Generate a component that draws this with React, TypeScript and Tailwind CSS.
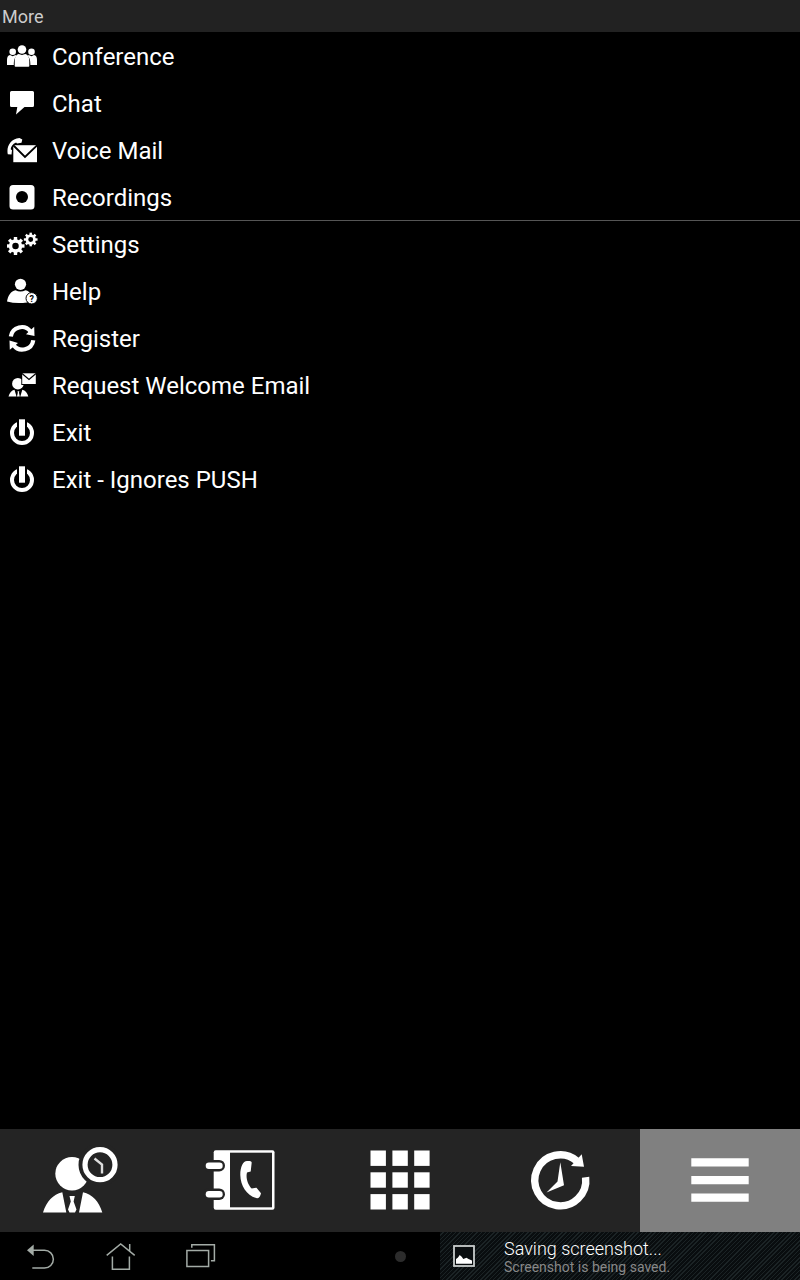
import React from 'react';

interface MenuItem {
  label: string;
  icon: React.ReactNode;
}

const TEETH = [0, 45, 90, 135, 180, 225, 270, 315];

const MenuIcon: React.FC<{ children: React.ReactNode }> = ({ children }) => (
  <svg viewBox="0 0 31 31" className="h-[31px] w-[31px] shrink-0 fill-white" aria-hidden="true">
    {children}
  </svg>
);

const TabIcon: React.FC<{ children: React.ReactNode }> = ({ children }) => (
  <svg viewBox="0 0 80 71" className="h-[71px] w-20 fill-white" aria-hidden="true">
    {children}
  </svg>
);

const SystemIcon: React.FC<{ children: React.ReactNode }> = ({ children }) => (
  <svg viewBox="0 0 40 32" className="h-8 w-10 fill-none stroke-[#a3aba6]" strokeWidth="1.5" aria-hidden="true">
    {children}
  </svg>
);

const Gear: React.FC<{ cx: number; cy: number; r: number; tooth: number }> = ({ cx, cy, r, tooth }) => (
  <g transform={`translate(${cx} ${cy})`}>
    <circle r={r} fill="none" stroke="white" strokeWidth={r * 0.7} />
    {TEETH.map((angle) => (
      <rect
        key={angle}
        x={-tooth / 2}
        y={-r * 1.8}
        width={tooth}
        height={r * 0.7}
        transform={`rotate(${angle})`}
      />
    ))}
  </g>
);

const PowerIcon = () => (
  <MenuIcon>
    <circle cx="15" cy="16" r="10" fill="none" stroke="white" strokeWidth="4" />
    <path d="M10 0h10v12H10z" fill="black" />
    <path d="M12 2.300h6v16.400h-6z" />
  </MenuIcon>
);

const callItems: MenuItem[] = [
  {
    label: 'Conference',
    icon: (
      <MenuIcon>
        <circle cx="5.7" cy="10.8" r="3.3" />
        <circle cx="24.5" cy="10.8" r="3.3" />
        <path d="M0 24v-5c0-3 1-4.8 3-5l2.700 1.300L8.500 14l1 1c-2 2-2.700 4-2.700 9z" />
        <path d="M30 24v-5c0-3-1-4.8-3-5l-2.500 1.300L21.700 14l-1 1c2 2 2.700 4 2.700 9z" />
        <circle cx="15" cy="8.5" r="4.3" />
        <path d="M7.700 25v-5c0-4 1.300-6.500 4-7L15 14l3.300-1c2.700.5 4 3 4 7v5q0 .8-.8.8h-13q-.8 0-.8-.8z" />
      </MenuIcon>
    ),
  },
  {
    label: 'Chat',
    icon: (
      <MenuIcon>
        <path d="M4.500 3h21q1.500 0 1.500 1.500v13q0 1.500-1.500 1.500h-8L9 26.500l1.300-7.500H4.500Q3 19 3 17.500v-13Q3 3 4.500 3z" />
      </MenuIcon>
    ),
  },
  {
    label: 'Voice Mail',
    icon: (
      <MenuIcon>
        <path d="M6.300 10.200H30v17H6.300z" />
        <path d="M6 10l12 12L30.500 10" fill="none" stroke="black" strokeWidth="1.8" />
        <path d="M4.500 19.500L.8 19.300C-.8 12 3 4 12.500 3l2.800 1.500-.8 3.300-4.500.7-.9-1C5.500 9 4 11.500 3.700 14.300l1.300.9z" />
      </MenuIcon>
    ),
  },
  {
    label: 'Recordings',
    icon: (
      <MenuIcon>
        <rect x="2.5" y="3" width="25" height="24.5" rx="3.5" />
        <circle cx="15" cy="15" r="6" fill="black" />
      </MenuIcon>
    ),
  },
];

const appItems: MenuItem[] = [
  {
    label: 'Settings',
    icon: (
      <MenuIcon>
        <Gear cx={8.5} cy={17} r={5} tooth={3.4} />
        <Gear cx={23.7} cy={10.5} r={3.8} tooth={2.4} />
      </MenuIcon>
    ),
  },
  {
    label: 'Help',
    icon: (
      <MenuIcon>
        <circle cx="13.5" cy="8.3" r="5.6" />
        <path d="M0 25.500C1 19.500 4 15 8.500 14.200q5 2.600 10 0c2.500.5 4.500 2 5.500 4L20 26.500Q9 28 0 25.500z" />
        <circle cx="24.7" cy="22.3" r="5.7" stroke="black" strokeWidth="1" />
        <text
          x="24.7"
          y="25.6"
          textAnchor="middle"
          fill="black"
          className="font-['Roboto',sans-serif] text-[9px] font-bold"
        >
          ?
        </text>
      </MenuIcon>
    ),
  },
  {
    label: 'Register',
    icon: (
      <MenuIcon>
        <path
          d="M3.800 13.500A11 11 0 0 1 23.500 8.500M26.300 17.200A11 11 0 0 1 6.500 22"
          fill="none"
          stroke="white"
          strokeWidth="4.2"
        />
        <path d="M27.200 3.800l.3 9.200-8.500-1.700zM2.800 26.800l-.3-9.200 8.500 2.500z" />
      </MenuIcon>
    ),
  },
  {
    label: 'Request Welcome Email',
    icon: (
      <MenuIcon>
        <circle cx="10.9" cy="13.7" r="5.8" />
        <path d="M14.300 2.500H30V15H14.300z" fill="black" />
        <path d="M15.200 3.300h13.600v10.700H15.200z" />
        <path d="M15 3.500l7 6 7-6" fill="none" stroke="black" strokeWidth="1.2" />
        <path d="M1.500 26.500c1-3.500 3-6 6-6.700l2 6.700zM21.300 26.500c-1-3.500-3-6-6-6.700l-2 6.700zM10.500 21.200h1.800l-.3 1.500.8 3.800h-2.800l.8-3.800z" />
      </MenuIcon>
    ),
  },
  { label: 'Exit', icon: <PowerIcon /> },
  { label: 'Exit - Ignores PUSH', icon: <PowerIcon /> },
];

const tabs = [
  {
    label: 'Presence',
    active: false,
    icon: (
      <TabIcon>
        <circle cx="32" cy="28.7" r="16.7" />
        <circle cx="60" cy="19.7" r="21.5" fill="#242424" />
        <circle cx="60" cy="19.7" r="15" fill="none" stroke="white" strokeWidth="5.2" />
        <path d="M54.500 13.500L62 19.500V28.500" fill="none" stroke="#ddd" strokeWidth="2.4" />
        <path d="M3 67.500C6.500 56.500 13 49.500 22.300 47.300L26.300 67.500zM62.300 67.500C59 56.500 52.500 49.500 43 47.300L39 67.500z" />
        <path d="M29.500 51h5.300l-1.200 5.500L36.500 64.500 35 67.500h-5.500L28 64.500l2.800-8z" />
      </TabIcon>
    ),
  },
  {
    label: 'Contacts',
    active: false,
    icon: (
      <TabIcon>
        <rect x="13.7" y="5.3" width="60.8" height="59.5" rx="2" />
        <rect x="30" y="7.7" width="42" height="54.6" fill="#242424" />
        {[17.5, 46].map((y) => (
          <g key={y}>
            <rect x="3" y={y - 2.6} width="22" height="11.6" rx="5.8" fill="#242424" />
            <rect x="5.7" y={y} width="17" height="6.4" rx="3.2" />
          </g>
        ))}
        <path d="M51.700 17.500L50.700 26.500 47 27.500C45.500 33 48 40 51.700 43.500L56.500 42.700 61 48.300C60.500 51.500 58.500 53.500 57 53.300 47 51 40.500 41 40.300 30 40.300 22 43 16 47 16 49 15.700 51.500 16 51.700 17.500z" />
      </TabIcon>
    ),
  },
  {
    label: 'Keypad',
    active: false,
    icon: (
      <TabIcon>
        {[5.5, 27.3, 49.1].map((y) =>
          [10.5, 32.4, 54.2].map((x) => <rect key={`${x}-${y}`} x={x} y={y} width="15.4" height="15.4" />)
        )}
      </TabIcon>
    ),
  },
  {
    label: 'History',
    active: false,
    icon: (
      <TabIcon>
        <path d="M65.600 32.200A25.500 25.500 0 1 1 56.700 15.800" fill="none" stroke="white" strokeWidth="7.4" />
        <path d="M61.700 9.300L64 21.800 51 21zM40.300 17.300L44 40.300 26.500 47.500 37.500 36.500z" />
      </TabIcon>
    ),
  },
  {
    label: 'More',
    active: true,
    icon: (
      <TabIcon>
        <path d="M11.300 13.300h57.400v8.300H11.300zM11.300 31h57.400v8.300H11.300zM11.300 48.500h57.400v8.300H11.300z" />
      </TabIcon>
    ),
  },
];

const systemButtons = [
  {
    label: 'Back',
    icon: (
      <SystemIcon>
        <path d="M13 10.300h11.500a8.800 8.800 0 0 1 0 17.700H12.300" />
        <path d="M7 10.300l6.700-5.800v11.600z" className="fill-[#a3aba6]" stroke="none" />
      </SystemIcon>
    ),
  },
  {
    label: 'Home',
    icon: (
      <SystemIcon>
        <path d="M6.700 15.300L20.700 4l14 11.300M12.400 16.500v12.800h17V16.500M29.700 4v7" />
      </SystemIcon>
    ),
  },
  {
    label: 'Recent apps',
    icon: (
      <SystemIcon>
        <path d="M6.900 10.600h21.700v16H6.900zM11.800 7.800V4.800h22.600v16h-3.500" />
      </SystemIcon>
    ),
  },
];

const MenuList: React.FC<{ items: MenuItem[] }> = ({ items }) => (
  <ul>
    {items.map((item) => (
      <li key={item.label}>
        <button type="button" className="flex h-[47px] w-full items-center gap-3.5 px-[7px] text-left text-2xl">
          {item.icon}
          <span>{item.label}</span>
        </button>
      </li>
    ))}
  </ul>
);

export default function App() {
  return (
    <div className="flex min-h-screen flex-col bg-black font-['Roboto',sans-serif] text-white">
      <header className="flex h-8 items-end bg-[#222222] px-0.5">
        <h1 className="text-lg leading-[30px] text-[#cccccc]">More</h1>
      </header>

      <main className="flex-1 pt-px">
        <div className="relative">
          <MenuList items={callItems} />
          <div className="absolute inset-x-0 bottom-0 h-px bg-[#555555]" />
        </div>
        <MenuList items={appItems} />
      </main>

      <nav className="grid h-[103px] grid-cols-5 bg-[#242424]">
        {tabs.map((tab) => (
          <button
            key={tab.label}
            type="button"
            aria-label={tab.label}
            className={`flex items-center justify-center ${tab.active ? 'bg-[#808080]' : ''}`}
          >
            {tab.icon}
          </button>
        ))}
      </nav>

      <footer className="flex h-12">
        <div className="flex flex-1 items-center">
          {systemButtons.map((button) => (
            <button
              key={button.label}
              type="button"
              aria-label={button.label}
              className="flex h-12 w-20 items-center justify-center"
            >
              {button.icon}
            </button>
          ))}
          <div className="ml-auto flex w-20 justify-center">
            <span className="h-[11px] w-[11px] rounded-full bg-[#2c2c2c]" />
          </div>
        </div>

        <div className="flex w-[45%] items-center bg-[#0b1012] bg-[repeating-linear-gradient(135deg,#090d0f_0px,#090d0f_2px,#1b2325_2px,#1b2325_3px)]">
          <div className="flex w-12 justify-center">
            <svg viewBox="0 0 22 22" className="h-[22px] w-[22px]" aria-hidden="true">
              <rect x="1" y="1" width="20" height="20" fill="#0a0e10" stroke="#c8cccc" strokeWidth="1.8" />
              <path d="M3 18.700v-4.700l2-1.500 1.700-2.500 2 1.700 1.600 2.300 3.200-1.200 2 1.200 3.500 1.500v3.200z" fill="white" />
            </svg>
          </div>
          <div className="pt-0.5 pl-4">
            <p className="text-lg leading-5 font-light">Saving screenshot...</p>
            <p className="text-sm leading-4 text-[#888888]">Screenshot is being saved.</p>
          </div>
        </div>
      </footer>
    </div>
  );
}
